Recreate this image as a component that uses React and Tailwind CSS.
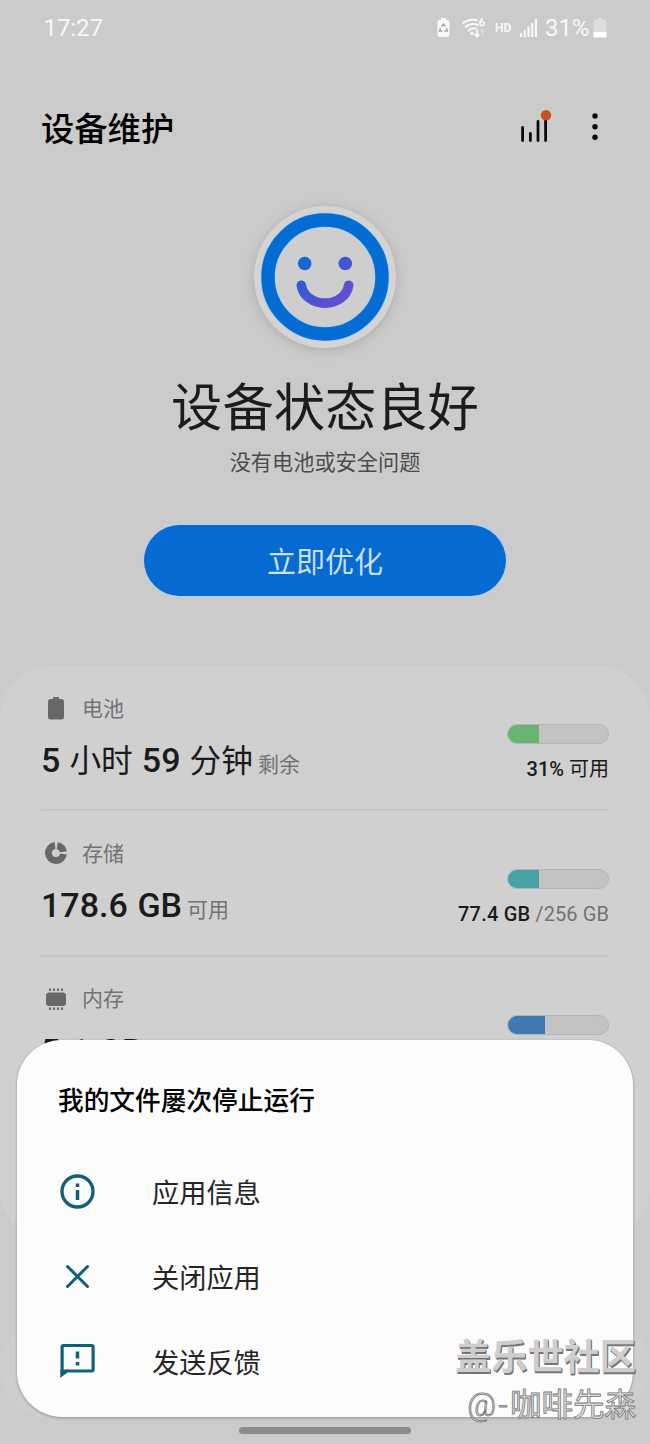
import React from "react";

const rows = [
  {
    id: "battery",
    label: "电池",
    Icon: BatteryIcon,
    value: (
      <>
        <b className="text-[34px] font-medium">5</b> 小时 <b className="text-[34px] font-medium">59</b> 分钟
      </>
    ),
    suffix: "剩余",
    percent: 31,
    fill: "bg-[#68b475]",
    detail: (
      <>
        <span className="font-medium">31%</span> 可用
      </>
    ),
  },
  {
    id: "storage",
    label: "存储",
    Icon: StorageIcon,
    value: <b className="text-[34px] font-medium">178.6 GB</b>,
    suffix: "可用",
    percent: 31,
    fill: "bg-[#46a2a3]",
    detail: (
      <>
        <span className="font-medium tracking-[0.2px]">77.4 GB</span>{" "}
        <span className="tracking-[0.1px] text-[#727272]">/256 GB</span>
      </>
    ),
  },
  {
    id: "memory",
    label: "内存",
    Icon: MemoryIcon,
    value: <b className="text-[34px] font-medium">5.1 GB</b>,
    suffix: "可用",
    percent: 37,
    fill: "bg-[#4179b4]",
    detail: null,
  },
];

const actions = [
  { label: "应用信息", Icon: InfoIcon },
  { label: "关闭应用", Icon: CloseIcon },
  { label: "发送反馈", Icon: FeedbackIcon },
];

function BatteryIcon() {
  return (
    <svg width="30" height="30" viewBox="0 0 30 30" fill="#686868">
      <path d="M12 3h6v2h2.500a2.500 2.500 0 0 1 2.500 2.500v15.500a2.500 2.500 0 0 1-2.500 2.500h-11a2.500 2.500 0 0 1-2.500-2.500v-15.500a2.500 2.500 0 0 1 2.500-2.500h2.500z" />
    </svg>
  );
}

function StorageIcon() {
  return (
    <svg width="30" height="30" viewBox="0 0 30 30" fill="none" stroke="#686868" strokeWidth="7">
      <path d="M14 6.570A7.500 7.500 0 1 0 22.430 15" />
      <path d="M16.200 6.600A7.500 7.500 0 0 1 22.400 12.800" />
    </svg>
  );
}

function MemoryIcon() {
  return (
    <svg width="30" height="30" viewBox="0 0 30 30" fill="#686868">
      <rect x="5" y="7.500" width="20" height="13.500" rx="3" />
      <path d="M8 3.500h2v2.500h-2zM12 3.500h2v2.500h-2zM16 3.500h2v2.500h-2zM20 3.500h2v2.500h-2zM8 22.500h2v2.500h-2zM12 22.500h2v2.500h-2zM16 22.500h2v2.500h-2zM20 22.500h2v2.500h-2z" />
    </svg>
  );
}

function InfoIcon() {
  return (
    <svg width="40" height="40" viewBox="0 0 40 40" fill="none" stroke="#116079" strokeWidth="3.300">
      <circle cx="19.500" cy="18.500" r="15.500" />
      <path d="M19.500 17v10M19.500 10.500v3.500" strokeWidth="3.500" />
    </svg>
  );
}

function CloseIcon() {
  return (
    <svg width="40" height="40" viewBox="0 0 40 40" fill="none" stroke="#116079" strokeWidth="3" strokeLinecap="round">
      <path d="M9.500 8.500L29.500 28.500M29.500 8.500L9.500 28.500" />
    </svg>
  );
}

function FeedbackIcon() {
  return (
    <svg width="40" height="40" viewBox="0 0 40 40" fill="none" stroke="#116079" strokeWidth="3.200">
      <path d="M4.100 31.500V4a1.500 1.500 0 0 1 1.500-1.500h28a1.500 1.500 0 0 1 1.500 1.500v22.500a1.500 1.500 0 0 1-1.500 1.500h-24.500z" />
      <path d="M2.500 35V26.500h8z" fill="#116079" stroke="none" />
      <path d="M19.500 8.500v7M19.500 19v3.500" strokeWidth="3.500" />
    </svg>
  );
}

function StatusBar() {
  return (
    <header className="flex h-[55px] items-center justify-between pl-[43.500px] pr-[43px] text-[24px] leading-none text-[#f8f8f8]">
      <span className="tracking-[-0.1px]">17:27</span>
      <div className="flex items-center">
        <svg width="15" height="21" viewBox="0 0 15 21" fill="none">
          <path d="M5 1h5v2h1.500a2 2 0 0 1 2 2v13a2 2 0 0 1-2 2h-8a2 2 0 0 1-2-2V5a2 2 0 0 1 2-2H5z" fill="#f8f8f8" />
          <path d="M5.500 9.500l2-2.500 2 2.500M10.500 11l1 3h-3M6.500 14h-3l1-3" stroke="#a5a5a5" strokeWidth="1.400" />
        </svg>
        <svg className="ml-[11px]" width="25" height="22" viewBox="0 0 25 22" fill="none" stroke="#f8f8f8" strokeWidth="2">
          <path d="M.5 6.500Q7 1 15.500 3.500M3 10.500Q9 5 16.500 8.300M6 14Q10 10 14.500 11.800" />
          <circle cx="10" cy="16.500" r="1.700" fill="#f8f8f8" stroke="none" />
          <path d="M15 12.500v7M12.500 17l2.500 2.500 2.500-2.500" />
          <path d="M20.500 19v-6M18.500 14.500l2-2 2 2" stroke="#dedede" strokeWidth="1.300" />
          <path d="M21 1.500Q17.500 3 17.800 6.300" strokeWidth="1.500" />
          <circle cx="20" cy="6.500" r="2.100" strokeWidth="1.500" />
        </svg>
        <span className="ml-[8px] w-[17px] text-[12px] font-bold">HD</span>
        <svg className="ml-[8px]" width="18" height="20" viewBox="0 0 18 20" fill="#f8f8f8">
          <path d="M0 15h2.200v4H0zM3.700 12h2.200v7H3.700zM7.400 8.500h2.200V19H7.400zM11.100 5h2.200v14h-2.200zM14.800 1H17v18h-2.200z" />
        </svg>
        <span className="ml-[7px] w-[46px] tracking-[-0.1px]">31%</span>
        <svg className="ml-[2px]" width="14" height="20" viewBox="0 0 14 20">
          <path d="M4.500 0h5v2H12a1.500 1.500 0 0 1 1.500 1.500V14H.5V3.500A1.500 1.500 0 0 1 2 2h2.500z" fill="#dedede" />
          <path d="M.5 14h13v4a1.500 1.500 0 0 1-1.500 1.500H2A1.500 1.500 0 0 1 .5 18z" fill="#fff" />
        </svg>
      </div>
    </header>
  );
}

function Toolbar() {
  return (
    <div className="flex h-[143px] items-center justify-between pl-[41px] pr-[43px]">
      <h1 className="pt-[6px] text-[33.300px] font-medium leading-none text-black">设备维护</h1>
      <div className="flex items-center gap-[31px]">
        <svg width="32" height="34" viewBox="0 0 32 34">
          <path d="M2.600 17.500v13M10.400 23.500v7M18 11.500v19M25.600 6.500v24" stroke="#0a0a0a" strokeWidth="2.800" strokeLinecap="round" />
          <circle cx="26" cy="5.200" r="5.200" fill="#c6501f" />
        </svg>
        <svg width="24" height="30" viewBox="0 0 24 30" fill="#0a0a0a">
          <circle cx="12" cy="4" r="2.700" />
          <circle cx="12" cy="14.700" r="2.700" />
          <circle cx="12" cy="25.300" r="2.700" />
        </svg>
      </div>
    </div>
  );
}

function Smiley() {
  return (
    <div className="flex h-[142px] w-[142px] items-center justify-center rounded-full bg-[#d5d3d4] shadow-[0_2px_12px_rgba(0,0,0,0.16)]">
      <svg width="142" height="142" viewBox="0 0 142 142" fill="none">
        <defs>
          <linearGradient id="face" gradientUnits="userSpaceOnUse" x1="43" y1="52" x2="92" y2="104">
            <stop offset="0" stopColor="#0a6bd3" />
            <stop offset="0.5" stopColor="#4356d0" />
            <stop offset="1" stopColor="#6d4ad2" />
          </linearGradient>
        </defs>
        <circle cx="71" cy="71" r="57" fill="#cecece" stroke="#a3d0f5" strokeWidth="15" />
        <circle cx="71" cy="71" r="57" stroke="#056cd3" strokeWidth="13.400" />
        <circle cx="50.700" cy="57.500" r="6.800" fill="url(#face)" />
        <circle cx="91.300" cy="57.500" r="6.800" fill="url(#face)" />
        <path d="M47.300 79.300C51.500 103 90.500 103 94.700 79.300" stroke="url(#face)" strokeWidth="9.600" strokeLinecap="round" />
      </svg>
    </div>
  );
}

function UsageRow({ row, last }) {
  const { Icon } = row;
  return (
    <li className={last ? "flex h-[146px] justify-between" : "flex h-[145.400px] justify-between"}>
      <div className="flex flex-col pt-[28px]">
        <div className="flex h-[30px] items-center gap-[11px] text-[21px] leading-none text-[#737373]">
          <Icon />
          <span>{row.label}</span>
        </div>
        <div className="mt-[16px] flex h-[40px] items-baseline text-[#1b1b1b]">
          <span className="text-[31.700px] leading-[40px] [word-spacing:1.200px]">{row.value}</span>
          <span className="ml-[5px] text-[21px] leading-none text-[#737373]">{row.suffix}</span>
        </div>
      </div>
      <div className="flex flex-col items-end pt-[58px]">
        <div className="h-[20px] w-[102px] overflow-hidden rounded-full border border-[#b5b5b5] bg-[#c3c3c3]">
          <div className={`h-full ${row.fill}`} style={{ width: `${row.percent}%` }} />
        </div>
        <p className="mt-[14px] text-[20px] leading-[22px] text-[#1b1b1b]">{row.detail}</p>
      </div>
    </li>
  );
}

function CrashSheet() {
  return (
    <section className="absolute left-[17px] top-[1040px] h-[377px] w-[616px] rounded-[45px] bg-[#fcfcfc] px-[41px] pt-[43px] shadow-[0_1px_3px_rgba(0,0,0,0.3)]">
      <h2 className="h-9 text-[25.700px] font-medium leading-9 text-black">我的文件屡次停止运行</h2>
      <ul className="mt-[31px]">
        {actions.map(({ label, Icon }) => (
          <li key={label} className="flex h-[85px] items-center gap-[54px] text-[27.200px] leading-none text-[#252525]">
            <Icon />
            <span className="pt-[5px]">{label}</span>
          </li>
        ))}
      </ul>
    </section>
  );
}

function Watermark() {
  return (
    <div className="absolute right-[14px] top-[1334px] flex flex-col items-end whitespace-nowrap">
      <span className="text-[36.200px] font-bold leading-[48px] text-[#cfcdcd] [text-shadow:1px_1px_0_#757575,1px_2px_0_#757575]">
        盖乐世社区
      </span>
      <span className="text-[31.500px] leading-[48px] text-[#dedede] [-webkit-text-stroke:0.800px_#777]">
        <span className="font-light tracking-[2.500px]">@-</span>咖啡先森
      </span>
    </div>
  );
}

export default function App() {
  return (
    <div className="relative h-[1444px] w-[650px] overflow-hidden bg-[#cbcbcb] font-['Roboto','Noto_Sans_CJK_SC',sans-serif]">
      <StatusBar />
      <Toolbar />
      <main className="flex flex-col items-center pt-2">
        <Smiley />
        <h2 className="mt-[29px] text-[51.300px] leading-[64px] text-[#1c1c1c]">设备状态良好</h2>
        <p className="mt-[6px] text-[21.200px] leading-[32px] text-[#4c4c4c]">没有电池或安全问题</p>
        <button className="mt-[46px] h-[71px] w-[362px] rounded-full bg-[#056ad1] pt-[5px] text-[29px] leading-none text-[#c9dff4] shadow-[0_0_0_1px_#b5cfe6]">
          立即优化
        </button>
        <ul className="mt-[70px] h-[574px] w-full rounded-[52px] bg-[#d0d0d0] px-[41px]">
          {rows.map((row, i) => (
            <React.Fragment key={row.id}>
              {i > 0 && <li className="-mt-[2px] h-[2px] bg-[#c4c4c4]" />}
              <UsageRow row={row} last={i === rows.length - 1} />
            </React.Fragment>
          ))}
        </ul>
        <div className="mt-[75px] h-[104px] w-full rounded-[52px] bg-[#cecece]" />
      </main>
      <CrashSheet />
      <Watermark />
      <div className="absolute left-[239px] top-[1427px] h-[7px] w-[172px] rounded-full bg-[#8b8b8b]" />
    </div>
  );
}
